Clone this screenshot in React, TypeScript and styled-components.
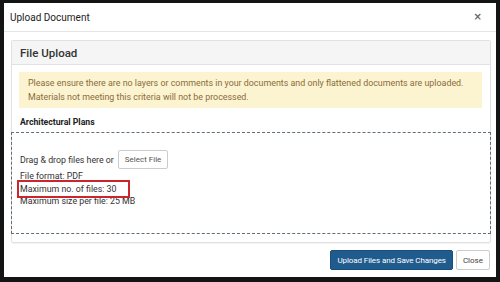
import React from 'react';
import styled, {createGlobalStyle} from 'styled-components';

const GlobalStyle = createGlobalStyle`
  html, body {
    margin: 0;
    padding: 0;
    background: #141414;
  }
  body {
    font-family: Roboto, "Liberation Sans", Arial, sans-serif;
    color: #333;
  }
  * {
    box-sizing: border-box;
  }
`

const requirements = [
    {text: "File format: PDF", marked: false},
    {text: "Maximum no. of files: 30", marked: true},
    {text: "Maximum size per file: 25 MB", marked: false},
]

export default function App() {
    return (
        <>
            <GlobalStyle/>
            <Frame>
                <Modal>
                    <ModalHeader>
                        <ModalTitle>Upload Document</ModalTitle>
                        <CloseX aria-label="close">×</CloseX>
                    </ModalHeader>
                    <ModalBody>
                        <Panel>
                            <PanelHeading>File Upload</PanelHeading>
                            <PanelBody>
                                <Warning>
                                    Please ensure there are no layers or comments in your documents and only flattened documents are uploaded.
                                    <br/>
                                    Materials not meeting this criteria will not be processed.
                                </Warning>
                                <SectionLabel>Architectural Plans</SectionLabel>
                            </PanelBody>
                            <DropZone>
                                <DropRow>
                                    Drag &amp; drop files here or
                                    <SelectButton>Select File</SelectButton>
                                </DropRow>
                                {requirements.map((r, index) => (
                                    <Requirement key={index} $marked={r.marked}>{r.text}</Requirement>
                                ))}
                            </DropZone>
                        </Panel>
                    </ModalBody>
                    <ModalFooter>
                        <PrimaryButton>Upload Files and Save Changes</PrimaryButton>
                        <DefaultButton>Close</DefaultButton>
                    </ModalFooter>
                </Modal>
            </Frame>
        </>
    );
}

const Frame = styled.div`
  width: 500px;
  height: 282px;
  padding: 3px 4px 5px 4px;
  display: flex;
`

const Modal = styled.div`
  flex: 1;
  background: #fff;
  display: flex;
  flex-direction: column;
`

const ModalHeader = styled.div`
  height: 29px;
  border-bottom: 1px solid #e5e5e5;
  display: flex;
  align-items: center;
  justify-content: space-between;
  padding: 0 14px 0 6px;
`

const ModalTitle = styled.h4`
  margin: 0;
  font-size: 10px;
  font-weight: 400;
  color: #222;
`

const CloseX = styled.span`
  font-family: "DejaVu Sans", sans-serif;
  font-size: 10px;
  font-weight: 700;
  color: #666;
  line-height: 1;
`

const ModalBody = styled.div`
  padding: 8px 5px 0 7px;
`

const Panel = styled.div`
  border: 1px solid #e1e1e1;
  border-radius: 2px;
  box-shadow: 0 1px 1px rgba(0, 0, 0, 0.05);
  padding-bottom: 8px;
`

const PanelHeading = styled.div`
  height: 24px;
  background: #f5f5f5;
  border-bottom: 1px solid #e1e1e1;
  display: flex;
  align-items: center;
  padding: 0 8px;
  font-size: 11.5px;
  font-weight: 500;
  color: #333;
`

const PanelBody = styled.div`
  padding: 7px 8px 0 7px;
`

const Warning = styled.div`
  background: #fcf3d0;
  color: #8a6d3b;
  font-size: 8.9px;
  line-height: 14px;
  padding: 4px 9px;
`

const SectionLabel = styled.div`
  font-size: 8.7px;
  font-weight: 700;
  color: #222;
  margin: 7px 0 0 1px;
  height: 14px;
  line-height: 14px;
`

const DropZone = styled.div`
  border: 1px dashed #5f6e78;
  margin: 3px -1px 0 -1px;
  height: 102px;
  padding: 17px 8px 0 8px;
  font-size: 8.8px;
  color: #333;
`

const DropRow = styled.div`
  display: flex;
  align-items: center;
  gap: 4px;
  margin-bottom: 1px;
`

const SelectButton = styled.button`
  font-family: inherit;
  font-size: 8px;
  color: #555;
  background: #fff;
  border: 1px solid #ccc;
  border-radius: 2px;
  height: 19px;
  padding: 0 6px;
`

const Requirement = styled.div<{ $marked: boolean }>`
  width: fit-content;
  line-height: 12.5px;
  outline: ${p => p.$marked ? '2px solid #c9262e' : 'none'};
  outline-offset: 1px;
  padding: 0 ${p => p.$marked ? '11px' : '0'} 0 0;
`

const ModalFooter = styled.div`
  display: flex;
  justify-content: flex-end;
  gap: 3px;
  padding: 7px 6px 0 0;
`

const PrimaryButton = styled.button`
  font-family: inherit;
  font-size: 8px;
  letter-spacing: -0.1px;
  color: #fff;
  background: #205b8d;
  border: 1px solid #1b4f7b;
  border-radius: 2px;
  height: 20px;
  padding: 0 6px;
`

const DefaultButton = styled.button`
  font-family: inherit;
  font-size: 8px;
  color: #444;
  background: #fff;
  border: 1px solid #ccc;
  border-radius: 2px;
  height: 20px;
  padding: 0 6px;
`
